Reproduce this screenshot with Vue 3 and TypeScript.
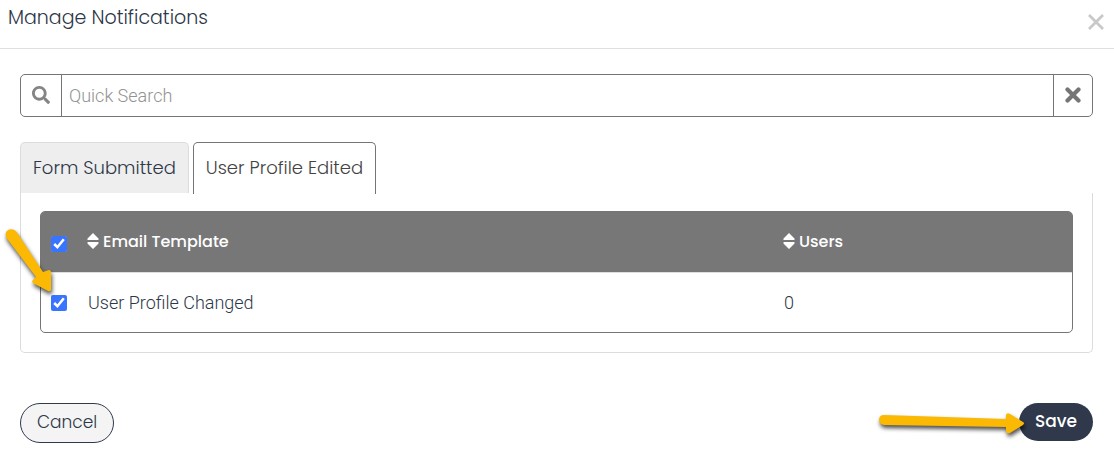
<script setup lang="ts">
import { computed, ref } from 'vue'

interface Template {
  id: number
  name: string
  users: number
  selected: boolean
}

const tabs = ['Form Submitted', 'User Profile Edited']
const columns = ['Email Template', 'Users']
const activeTab = ref(1)
const search = ref('')
const templates = ref<Template[]>([
  { id: 1, name: 'User Profile Changed', users: 0, selected: true },
])

const visibleTemplates = computed(() =>
  templates.value.filter((t) => t.name.toLowerCase().includes(search.value.toLowerCase())),
)

const allSelected = computed({
  get: () => templates.value.every((t) => t.selected),
  set: (value: boolean) => templates.value.forEach((t) => (t.selected = value)),
})
</script>

<template>
  <div class="dialog" role="dialog" aria-labelledby="dialog-title">
    <header class="dialog-header">
      <h1 id="dialog-title">Manage Notifications</h1>
      <button class="close" type="button" aria-label="Close">
        <svg width="16" height="16" viewBox="0 0 16 16">
          <path d="M1 1 15 15M15 1 1 15" fill="none" stroke="#c8c8c8" stroke-width="2.8" />
        </svg>
      </button>
    </header>

    <main class="dialog-body">
      <div class="search">
        <label class="search-icon" for="quick-search" aria-label="Quick Search">
          <svg width="18" height="18" viewBox="0 0 512 512">
            <path fill="#858585" d="M505 442.700 405.300 343c-4.500-4.500-10.600-7-17-7H372c27.600-35.300 44-79.700 44-128C416 93.100 322.900 0 208 0S0 93.100 0 208s93.100 208 208 208c48.300 0 92.700-16.400 128-44v16.300c0 6.400 2.500 12.500 7 17l99.700 99.700c9.400 9.400 24.600 9.400 33.900 0l28.300-28.300c9.400-9.400 9.400-24.600.1-34zM208 336c-70.700 0-128-57.200-128-128 0-70.700 57.200-128 128-128 70.700 0 128 57.200 128 128 0 70.700-57.200 128-128 128z" />
          </svg>
        </label>
        <input id="quick-search" v-model="search" type="text" placeholder="Quick Search" />
        <button class="clear" type="button" aria-label="Clear search" @click="search = ''">
          <svg width="16" height="16" viewBox="0 0 16 16">
            <path d="M2.500 2.500 13.500 13.500M13.500 2.500 2.500 13.500" fill="none" stroke="#757575" stroke-width="4.200" stroke-linecap="round" />
          </svg>
        </button>
      </div>

      <div class="tabs" role="tablist">
        <button
          v-for="(tab, index) in tabs"
          :key="tab"
          class="tab"
          :class="{ active: index === activeTab }"
          type="button"
          role="tab"
          :aria-selected="index === activeTab"
          @click="activeTab = index"
        >{{ tab }}</button>
      </div>

      <section class="panel">
        <table>
          <thead>
            <tr>
              <th class="check"><input v-model="allSelected" type="checkbox" aria-label="Select all" /></th>
              <th v-for="column in columns" :key="column">
                <button class="sort" type="button">
                  <svg width="12" height="16" viewBox="0 0 12 16">
                    <path d="M6 0 11.500 5.500Q12 7 11 7H1Q0 7 .5 5.500ZM6 16 11.500 10.500Q12 9 11 9H1Q0 9 .5 10.500Z" fill="#fff" />
                  </svg>
                  {{ column }}
                </button>
              </th>
            </tr>
          </thead>
          <tbody>
            <tr v-for="template in visibleTemplates" :key="template.id">
              <td class="check">
                <input v-model="template.selected" type="checkbox" :aria-label="template.name" />
                <svg class="pointer row-pointer" width="60" height="76" viewBox="0 0 60 76" aria-hidden="true">
                  <path d="M6.500 13Q4 7 9 4.500Q14 3 17 7.500L43 47L49 45Q51 45 51 48L51 65Q50 67 48 66L33 58Q31 56 34 54L36 52Z" fill="#fbb904" />
                </svg>
              </td>
              <td>{{ template.name }}</td>
              <td>{{ template.users }}</td>
            </tr>
          </tbody>
        </table>
      </section>

      <footer class="actions">
        <button class="pill cancel" type="button">Cancel</button>
        <div class="save-wrap">
          <button class="pill save" type="button">Save</button>
          <svg class="pointer save-pointer" width="152" height="32" viewBox="0 0 152 32" aria-hidden="true">
            <path d="M9 5 131 9V5Q132 2 135 4L148 12Q150 13 148 15L135 23Q131 24 131 21V17L9 15Q4 14 4 10Q4 5 9 5Z" fill="#fbb904" />
          </svg>
        </div>
      </footer>
    </main>
  </div>
</template>

<style>
body {
  margin: 0;
  background: #fff;
}
</style>

<style scoped>
.dialog {
  font-family: Poppins, Inter, sans-serif;
  font-size: 17px;
  color: #2d3748;
}

.dialog *,
.dialog *::before {
  box-sizing: border-box;
}

button {
  padding: 0;
  border: 0;
  background: none;
  color: inherit;
  font: inherit;
  cursor: pointer;
}

svg {
  display: block;
}

.dialog-header {
  display: flex;
  justify-content: space-between;
  height: 49px;
  padding: 6px 10px 0 8px;
  border-bottom: 1px solid #dfdfdf;
}

h1 {
  margin: 0;
  font-size: 19px;
  font-weight: 300;
  line-height: 24px;
}

.close {
  align-self: flex-start;
  margin-top: 8px;
}

.dialog-body {
  padding: 25px 21px 24px 20px;
}

.search {
  display: flex;
  height: 43px;
  border: 1px solid #757575;
  border-radius: 5px;
}

.search-icon,
.clear {
  display: flex;
  flex: none;
  align-items: center;
  justify-content: center;
  width: 40px;
  padding-bottom: 2px;
}

.clear {
  width: 38px;
}

.search input {
  flex: 1;
  min-width: 0;
  padding: 0 7px;
  border: solid #757575;
  border-width: 0 1px;
  outline: 0;
  background: none;
  color: #2d3748;
  font: 350 18px Roboto, sans-serif;
}

.search input::placeholder {
  color: #929292;
  opacity: 1;
}

.tabs {
  display: flex;
  gap: 4px;
  margin-top: 25px;
}

.tab {
  height: 51px;
  padding: 0 12px 2px;
  border: 1px solid #dcdcdc;
  border-bottom: 0;
  border-radius: 5px 5px 0 0;
  background: #eee;
  font-size: 18px;
  font-weight: 300;
}

.tab.active {
  height: 52px;
  margin-bottom: -1px;
  padding-bottom: 3px;
  border-color: #757575;
  background: #fff;
  color: #444;
}

.panel {
  padding: 18px 19px 19px;
  border: 1px solid #dcdcdc;
  border-top: 0;
  border-radius: 0 0 5px 5px;
}

table {
  width: 100%;
  border: 1px solid #757575;
  border-radius: 5px;
  border-spacing: 0;
  table-layout: fixed;
}

th,
td {
  height: 60px;
  padding: 0 10px;
  text-align: left;
}

th {
  background: #777;
  color: #fff;
  font-size: 16px;
  font-weight: 500;
}

th:first-child {
  border-top-left-radius: 3px;
}

th:last-child {
  width: 29%;
  border-top-right-radius: 3px;
}

td {
  padding-left: 11px;
  border-top: 1px solid #dedede;
  font: 350 18px Roboto, sans-serif;
}

th.check,
td.check {
  position: relative;
  width: 36px;
  padding-left: 10px;
}

.check input {
  display: block;
  width: 16px;
  height: 16px;
  margin: 0;
  accent-color: #3874ff;
}

th.check input {
  margin-top: 4px;
}

.sort {
  display: flex;
  gap: 4px;
  align-items: center;
  padding-bottom: 2px;
}

.pointer {
  position: absolute;
  filter: drop-shadow(1px 3px 2px rgb(0 0 0 / 70%));
  pointer-events: none;
}

.row-pointer {
  top: -48px;
  left: -41px;
}

.actions {
  display: flex;
  justify-content: space-between;
  align-items: flex-start;
  margin-top: 50px;
}

.pill {
  height: 40px;
  padding: 0 16px 2px;
  border-radius: 20px;
}

.cancel {
  border: 1px solid #2f3b4b;
  background: #f4f4f4;
  font-weight: 300;
}

.save-wrap {
  position: relative;
}

.save {
  height: 38px;
  background: #2f394b;
  color: #fff;
  font-weight: 500;
}

.save-pointer {
  top: 7px;
  right: 66px;
}
</style>
